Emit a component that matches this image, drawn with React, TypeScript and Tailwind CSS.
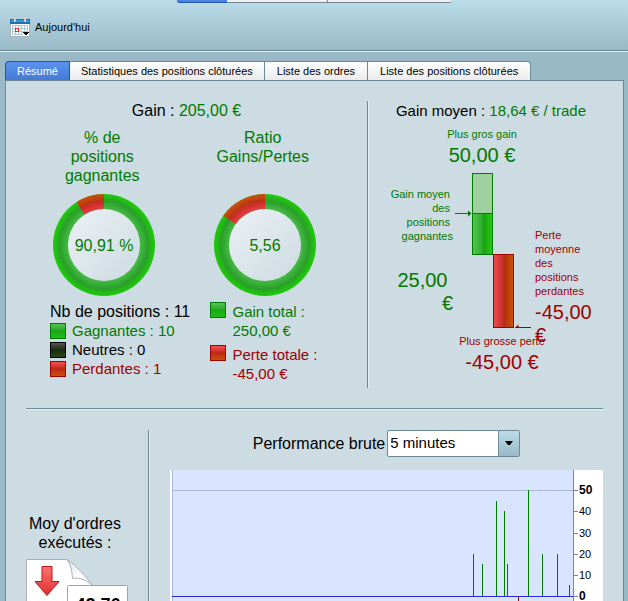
import { useId, useState } from "react";

type Tone = "green" | "black" | "red";

const tabs = [
  "Résumé",
  "Statistiques des positions clôturées",
  "Liste des ordres",
  "Liste des positions clôturées",
];

const periods = ["5 minutes", "15 minutes", "1 heure", "1 jour"];

const swatches: Record<Tone, string> = {
  green: "border-[#007a00] from-[#55c455] via-[#1ea51a] to-[#1ec00f]",
  black: "border-black from-[#555555] via-[#1c2a12] to-[#244a10]",
  red: "border-[#a00000] from-[#f45252] via-[#bd2a10] to-[#c8500a]",
};

const bars = [
  { x: 301, value: 20 },
  { x: 310, value: 15 },
  { x: 324, value: 45 },
  { x: 332, value: 40 },
  { x: 335, value: 15 },
  { x: 346, value: -45 },
  { x: 356, value: 50 },
  { x: 370, value: 20 },
  { x: 385, value: 20 },
  { x: 397, value: 5 },
];

const ticks = [
  { label: "50", y: 20, bold: true },
  { label: "40", y: 41 },
  { label: "30", y: 63 },
  { label: "20", y: 84 },
  { label: "10", y: 105 },
  { label: "0", y: 126, bold: true },
];

function CalendarIcon() {
  return (
    <svg width="20" height="20" viewBox="0 0 20 20" aria-hidden="true" shapeRendering="crispEdges">
      <rect x="0" y="2" width="20" height="18" fill="#b3b3b3" />
      <rect x="1" y="6" width="18" height="13" fill="#ffffff" />
      <rect x="0" y="2" width="20" height="5" fill="#1672b0" />
      <rect x="1" y="3" width="18" height="2" fill="#3a9ad6" />
      <rect x="4" y="0" width="2" height="5" fill="#d9c9c9" />
      <rect x="14" y="0" width="2" height="5" fill="#d9c9c9" />
      <path
        d="M2 8.500h16M2 11.500h16M2 14.500h16M2 17.500h11M2.500 8v10M5.500 8v10M8.500 8v10M11.500 8v10M14.500 8v6M17.500 8v6"
        stroke="#a9cbe0"
      />
      <rect x="5.500" y="11.500" width="3" height="3" fill="#fff" stroke="#f03030" />
      <path d="M13 15h6v1h-1v1h-1v1h-2v-1h-1v-1h-1z" fill="#000" />
    </svg>
  );
}

function Swatch({ tone }: { tone: Tone }) {
  return <span className={`block size-4 shrink-0 border bg-linear-to-b ${swatches[tone]}`} />;
}

function Donut({ label, loss }: { label: string; loss: number }) {
  const id = useId();
  const angle = loss * 2 * Math.PI;
  const point = (r: number) => `${51 - r * Math.sin(angle)} ${51 - r * Math.cos(angle)}`;
  const slice = `M51 0A51 51 0 0 0 ${point(51)}L${point(36)}A36 36 0 0 1 51 15Z`;

  return (
    <svg width="102" height="102" viewBox="0 0 102 102" role="img" aria-label={label}>
      <defs>
        <radialGradient id={`${id}g`} gradientUnits="userSpaceOnUse" cx="51" cy="51" r="51">
          <stop offset="0.7" stopColor="#46bb46" />
          <stop offset="0.86" stopColor="#2a9f2a" />
          <stop offset="0.97" stopColor="#1fc60c" />
        </radialGradient>
        <radialGradient id={`${id}r`} gradientUnits="userSpaceOnUse" cx="51" cy="51" r="51">
          <stop offset="0.7" stopColor="#e64040" />
          <stop offset="0.84" stopColor="#cc2c2c" />
          <stop offset="0.87" stopColor="#b83610" />
          <stop offset="1" stopColor="#c8520c" />
        </radialGradient>
        <linearGradient id={`${id}c`} x1="0" y1="0" x2="1" y2="1">
          <stop offset="0.1" stopColor="#e9eff3" />
          <stop offset="1" stopColor="#ccdae1" />
        </linearGradient>
      </defs>
      <circle cx="51" cy="51" r="51" fill={`url(#${id}g)`} />
      <path d={slice} fill={`url(#${id}r)`} />
      <circle cx="51" cy="51" r="36" fill={`url(#${id}c)`} />
      <text x="51" y="57" textAnchor="middle" fontSize="16" fill="#007a00">
        {label}
      </text>
    </svg>
  );
}

function GainLossBars() {
  return (
    <svg width="80" height="155" viewBox="0 0 80 155" className="shrink-0" aria-hidden="true">
      <defs>
        <linearGradient id="gainBar">
          <stop offset="0" stopColor="#55c455" />
          <stop offset="0.48" stopColor="#2fae2f" />
          <stop offset="0.52" stopColor="#18a010" />
          <stop offset="1" stopColor="#25cc12" />
        </linearGradient>
        <linearGradient id="lossBar">
          <stop offset="0" stopColor="#f24c4c" />
          <stop offset="0.48" stopColor="#c82c2c" />
          <stop offset="0.52" stopColor="#b42c0c" />
          <stop offset="1" stopColor="#c8560e" />
        </linearGradient>
      </defs>
      <rect x="19.500" y="0.500" width="20" height="40" fill="#a0d0a0" stroke="#007a00" />
      <rect x="19.500" y="40.500" width="20" height="41" fill="url(#gainBar)" stroke="#007a00" />
      <rect x="40.500" y="81.500" width="20" height="73" fill="url(#lossBar)" stroke="#a00000" />
      <path d="M2 40.500h14" stroke="#007a00" />
      <path d="M15 37.500v6l3.500-3z" fill="#007a00" />
      <path d="M64 154.500h14" stroke="#a00000" />
      <path d="M65.500 151.500v6l-3.500-3z" fill="#a00000" />
    </svg>
  );
}

function OrdersIcon() {
  return (
    <svg width="103" height="103" viewBox="0 0 103 103" role="img" aria-label="42,76">
      <defs>
        <linearGradient id="arrow" x2="0" y2="1">
          <stop offset="0" stopColor="#ff7070" />
          <stop offset="1" stopColor="#e03030" />
        </linearGradient>
        <linearGradient id="fold" x2="1" y2="1">
          <stop offset="0" stopColor="#dfe3e6" />
          <stop offset="0.6" stopColor="#ffffff" />
        </linearGradient>
      </defs>
      <path d="M0.500 0.500H41L66 26V102.500H0.500Z" fill="#fff" stroke="#a9b2b8" />
      <path
        d="M41 0.500C45 6 46 12 46.500 19.500C54 18 60 21 66 26C60 18 51 7 41 0.500Z"
        fill="url(#fold)"
        stroke="#a9b2b8"
      />
      <path d="M16 7.500h10v15h7l-12 14-12-14h7z" fill="url(#arrow)" stroke="#b81818" />
      <rect x="41.500" y="26.500" width="60" height="40" rx="1" fill="#fff" stroke="#9aa5ab" />
      <text x="72" y="52" textAnchor="middle" fontSize="18" fontWeight="700" fill="#000">
        42,76
      </text>
    </svg>
  );
}

function PerformanceChart() {
  return (
    <div className="mt-[13px] flex h-[160px] border-l-2 border-white bg-white">
      <svg
        viewBox="0 0 401 160"
        preserveAspectRatio="none"
        className="h-full min-w-0 flex-1 bg-[#d9e4ff]"
        shapeRendering="crispEdges"
        role="img"
        aria-label="Performance brute"
      >
        <rect x="0" y="0" width="1" height="160" fill="#a9b8da" />
        <rect x="0" y="20" width="401" height="1" fill="#a9b8da" />
        {bars.map((bar) => {
          const height = Math.round(Math.abs(bar.value) * 2.12);
          return (
            <rect
              key={bar.x}
              x={bar.x}
              y={bar.value > 0 ? 126 - height : 126}
              width="1"
              height={height}
              fill={bar.value > 0 ? "#007a00" : "#a00000"}
            />
          );
        })}
        <rect x="0" y="126" width="401" height="1" fill="#2a2ad8" />
      </svg>
      <svg width="30" height="160" viewBox="0 0 30 160" aria-hidden="true">
        <rect width="1" height="160" fill="#6f8a94" />
        {ticks.map((tick) => (
          <g key={tick.label}>
            <rect x="1" y={tick.y} width="4" height="1" fill="#6f8a94" />
            <text
              x="6"
              y={tick.y + 4}
              fontSize={tick.bold ? 12 : 11}
              fontWeight={tick.bold ? 700 : 400}
            >
              {tick.label}
            </text>
          </g>
        ))}
      </svg>
    </div>
  );
}

function Toolbar() {
  return (
    <header className="flex h-[52px] shrink-0 flex-col border-b border-[#e2f1f7] bg-linear-to-b from-[#bbdce9] to-[#9ab9c7]">
      <div className="flex h-[51px] flex-col border-b border-[#6b8893]">
        <div className="mx-auto flex h-[3px] w-[275px] rounded-b-sm border-b border-[#6f8a94] bg-[#efefef]">
          <span className="h-[3px] w-[50px] rounded-bl-sm border-b border-[#2456b0] bg-[#4a83e0]" />
          <span className="w-[101px] border-r border-[#6f8a94]" />
        </div>
        <button type="button" className="mt-3.5 ml-2.5 flex items-center gap-[5px] self-start text-[11px]">
          <CalendarIcon />
          Aujourd'hui
        </button>
      </div>
    </header>
  );
}

export default function App() {
  const [activeTab, setActiveTab] = useState(0);
  const [period, setPeriod] = useState(periods[0]);

  return (
    <div className="flex h-screen flex-col overflow-hidden bg-[#9ab9c7] font-['Liberation_Sans',Arial,sans-serif] text-black">
      <Toolbar />
      <nav role="tablist" className="mt-[9px] ml-[5px] flex shrink-0">
        {tabs.map((tab, index) => (
          <button
            key={tab}
            type="button"
            role="tab"
            aria-selected={activeTab === index}
            onClick={() => setActiveTab(index)}
            className={`h-[19px] border-t border-r text-[11px] leading-[18px] whitespace-nowrap first:rounded-tl-sm last:rounded-tr-sm ${
              activeTab === index
                ? "border-[#2456b0] bg-linear-to-b from-[#5a92ee] to-[#447bd6] text-white"
                : "border-[#6f8a94] bg-linear-to-b from-white to-[#ebebeb]"
            } ${index === 0 ? "border-l" : ""} ${index > 1 ? "px-3" : "px-[11px]"}`}
          >
            {tab}
          </button>
        ))}
      </nav>

      <main className="mr-1 ml-[5px] min-h-0 flex-1 overflow-hidden border-x border-t border-[#6f8a94] bg-[#cddbe2] px-5 pt-5">
        <section className="grid grid-cols-[51fr_2px_35fr]">
          <div className="pr-5 text-[15px]">
            <p className="text-center text-base leading-5">
              Gain : <span className="text-[#007a00]">205,00 €</span>
            </p>
            <div className="mt-[7px] grid grid-cols-2 leading-[19px]">
              <div>
                <h2 className="h-[57px] pr-2 text-center text-base leading-[19px] text-[#007a00]">
                  % de
                  <br />
                  positions
                  <br />
                  gagnantes
                </h2>
                <div className="mt-[9px] flex justify-center pr-1">
                  <Donut label="90,91 %" loss={1 / 11} />
                </div>
                <div className="mt-1.5 pl-6 whitespace-nowrap">
                  <p className="text-base leading-[19px]">Nb de positions : 11</p>
                  <p className="flex items-center gap-1.5 text-[#007a00]">
                    <Swatch tone="green" />
                    Gagnantes : 10
                  </p>
                  <p className="flex items-center gap-1.5">
                    <Swatch tone="black" />
                    Neutres : 0
                  </p>
                  <p className="flex items-center gap-1.5 text-[#a00000]">
                    <Swatch tone="red" />
                    Perdantes : 1
                  </p>
                </div>
              </div>
              <div>
                <h2 className="h-[57px] pr-2 text-center text-base leading-[19px] text-[#007a00]">
                  Ratio
                  <br />
                  Gains/Pertes
                </h2>
                <div className="mt-[9px] flex justify-center pr-1">
                  <Donut label="5,56" loss={45 / 295} />
                </div>
                <div className="mt-1.5 flex flex-col gap-[5px] pl-6 whitespace-nowrap">
                  <p className="flex gap-1.5 text-[#007a00]">
                    <Swatch tone="green" />
                    <span>
                      Gain total :<br />
                      250,00 €
                    </span>
                  </p>
                  <p className="flex gap-1.5 text-[#a00000]">
                    <Swatch tone="red" />
                    <span>
                      Perte totale :<br />
                      -45,00 €
                    </span>
                  </p>
                </div>
              </div>
            </div>
          </div>

          <div className="border-l border-[#6f8a94] bg-[#e2f1f7]" />

          <div className="pb-3.5 text-center text-[11px] leading-[14px]">
            <p className="pl-2.5 text-[15px] leading-5 whitespace-nowrap">
              Gain moyen : <span className="text-[#007a00]">18,64 € / trade</span>
            </p>
            <div className="mt-1.5 pr-2 text-[#007a00]">
              <p>Plus gros gain</p>
              <p className="mt-0.5 text-xl leading-6">50,00 €</p>
            </div>
            <div className="mt-1.5 flex h-[155px] pl-4">
              <div className="flex-1 pt-3.5 text-right whitespace-pre text-[#007a00]">
                <p>{"Gain moyen \ndes \npositions \ngagnantes"}</p>
                <p className="mt-[26px] text-xl leading-[23px]">{"25,00 \n€"}</p>
              </div>
              <GainLossBars />
              <div className="flex-1 pt-[55px] pl-0.5 text-left whitespace-pre text-[#a00000]">
                <p>{"Perte\nmoyenne\ndes\npositions\nperdantes"}</p>
                <p className="mt-[3px] text-xl leading-[23px]">{"-45,00\n€"}</p>
              </div>
            </div>
            <div className="mt-1.5 pl-8 text-[#a00000]">
              <p>Plus grosse perte</p>
              <p className="mt-0.5 text-xl leading-6">-45,00 €</p>
            </div>
          </div>
        </section>

        <hr className="mt-5 h-0.5 border-t border-[#6f8a94] bg-[#e2f1f7]" />

        <section className="mt-5 grid min-h-[200px] grid-cols-[122px_2px_1fr]">
          <div className="pt-[84px]">
            <h2 className="pr-6 text-center text-base leading-[19px]">
              Moy d'ordres
              <br />
              exécutés :
            </h2>
            <div className="mt-[7px]">
              <OrdersIcon />
            </div>
          </div>
          <div className="border-l border-[#6f8a94] bg-[#e2f1f7]" />
          <div className="min-w-0 pl-5">
            <div className="flex items-center justify-center gap-0.5">
              <label htmlFor="period" className="text-base">
                Performance brute
              </label>
              <div className="relative w-[133px]">
                <select
                  id="period"
                  value={period}
                  onChange={(e) => setPeriod(e.target.value)}
                  className="block h-[27px] w-full appearance-none rounded-xs border border-[#6f8a94] bg-white pr-6 pl-0.5 text-[15px]"
                >
                  {periods.map((item) => (
                    <option key={item}>{item}</option>
                  ))}
                </select>
                <span className="pointer-events-none absolute inset-y-px right-px flex w-[21px] items-center justify-center border-l border-[#6f8a94] bg-linear-to-b from-[#bbdce9] to-[#9ab9c7]">
                  <svg width="8" height="5" viewBox="0 0 8 5" aria-hidden="true">
                    <path d="M0 0h8L5 4H3z" />
                  </svg>
                </span>
              </div>
            </div>
            <PerformanceChart />
          </div>
        </section>
      </main>
    </div>
  );
}
